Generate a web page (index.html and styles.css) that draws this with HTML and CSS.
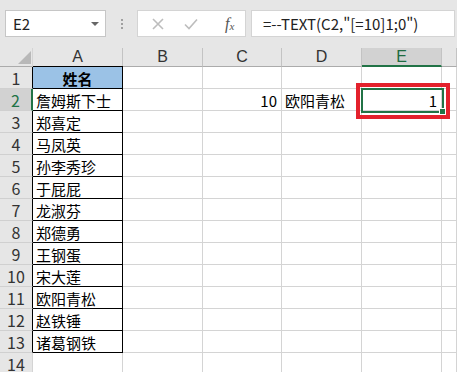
FILE: index.html
```html
<!DOCTYPE html>
<html lang="zh">
<head>
  <meta charset="UTF-8">
  <title>TEXT</title>
  <link rel="stylesheet" href="styles.css">
</head>
<body>
  <!-- formula bar -->
  <div class="toolbar">
    <div class="name-box">
      <span>E2</span>
      <span class="drop"></span>
    </div>
    <div class="grip"><i></i><i></i><i></i></div>
    <div class="fx-box">
      <svg class="ico" width="14" height="14" viewBox="0 0 14 14"><path d="M2 2 L12 12 M12 2 L2 12" stroke="#bdbdbd" stroke-width="1.6" fill="none"/></svg>
      <svg class="ico" width="16" height="14" viewBox="0 0 16 14"><path d="M2 7.5 L6 11.5 L14 2.5" stroke="#bdbdbd" stroke-width="1.6" fill="none"/></svg>
      <span class="fx">f<sub>x</sub></span>
    </div>
    <div class="formula">=--TEXT(C2,"[=10]1;0")</div>
  </div>

  <!-- sheet -->
  <div class="sheet">
    <div class="grid">
      <div class="hd corner"><span class="tri"></span></div>
      <div class="hd col">A</div>
      <div class="hd col">B</div>
      <div class="hd col">C</div>
      <div class="hd col">D</div>
      <div class="hd col active">E</div>
      <div class="hd col"></div>

      <div class="hd row">1</div>
      <div class="c a title">姓名</div>
      <div class="c"></div><div class="c"></div><div class="c"></div><div class="c"></div><div class="c"></div>

      <div class="hd row active">2</div>
      <div class="c a">詹姆斯下士</div>
      <div class="c"></div>
      <div class="c num">10</div>
      <div class="c">欧阳青松</div>
      <div class="c num">1</div>
      <div class="c"></div>

      <div class="hd row">3</div><div class="c a">郑喜定</div><div class="c"></div><div class="c"></div><div class="c"></div><div class="c"></div><div class="c"></div>
      <div class="hd row">4</div><div class="c a">马凤英</div><div class="c"></div><div class="c"></div><div class="c"></div><div class="c"></div><div class="c"></div>
      <div class="hd row">5</div><div class="c a">孙李秀珍</div><div class="c"></div><div class="c"></div><div class="c"></div><div class="c"></div><div class="c"></div>
      <div class="hd row">6</div><div class="c a">于屁屁</div><div class="c"></div><div class="c"></div><div class="c"></div><div class="c"></div><div class="c"></div>
      <div class="hd row">7</div><div class="c a">龙淑芬</div><div class="c"></div><div class="c"></div><div class="c"></div><div class="c"></div><div class="c"></div>
      <div class="hd row">8</div><div class="c a">郑德勇</div><div class="c"></div><div class="c"></div><div class="c"></div><div class="c"></div><div class="c"></div>
      <div class="hd row">9</div><div class="c a">王钢蛋</div><div class="c"></div><div class="c"></div><div class="c"></div><div class="c"></div><div class="c"></div>
      <div class="hd row">10</div><div class="c a">宋大莲</div><div class="c"></div><div class="c"></div><div class="c"></div><div class="c"></div><div class="c"></div>
      <div class="hd row">11</div><div class="c a">欧阳青松</div><div class="c"></div><div class="c"></div><div class="c"></div><div class="c"></div><div class="c"></div>
      <div class="hd row">12</div><div class="c a">赵铁锤</div><div class="c"></div><div class="c"></div><div class="c"></div><div class="c"></div><div class="c"></div>
      <div class="hd row">13</div><div class="c a">诸葛钢铁</div><div class="c"></div><div class="c"></div><div class="c"></div><div class="c"></div><div class="c"></div>
      <div class="hd row">14</div><div class="c"></div><div class="c"></div><div class="c"></div><div class="c"></div><div class="c"></div><div class="c"></div>
    </div>
    <!-- selection + highlight -->
    <div class="highlight"></div>
    <div class="selection"><span class="handle"></span></div>
  </div>
</body>
</html>
```

FILE: styles.css
```css
body {
  margin: 0;
  width: 457px;
  height: 372px;
  overflow: hidden;
  background: #fff;
  font-family: "Noto Sans CJK SC", "Liberation Sans", sans-serif;
  font-size: 15px;
  color: #000;
}
.toolbar {
  height: 48px;
  background: #e6e6e6;
  display: flex;
  align-items: flex-start;
  padding: 10px 2px 0 5px;
  box-sizing: border-box;
}
.name-box {
  width: 101px;
  height: 27px;
  box-sizing: border-box;
  background: #fff;
  border: 1px solid #c6c6c6;
  display: flex;
  align-items: center;
  justify-content: space-between;
  padding: 0 6px 0 7px;
  color: #222;
}
.drop {
  width: 0;
  height: 0;
  border-left: 4px solid transparent;
  border-right: 4px solid transparent;
  border-top: 4px solid #666;
}
.grip {
  width: 31px;
  height: 27px;
  display: flex;
  flex-direction: column;
  align-items: center;
  justify-content: center;
  gap: 2px;
}
.grip i {
  width: 2px;
  height: 2px;
  background: #a0a0a0;
}
.fx-box {
  width: 109px;
  height: 27px;
  box-sizing: border-box;
  background: #fff;
  border: 1px solid #d4d4d4;
  display: flex;
  align-items: center;
  padding-left: 13px;
  gap: 18px;
}
.fx {
  font-family: "Liberation Serif", serif;
  font-style: italic;
  font-size: 16px;
  color: #555;
  margin-left: 8px;
}
.fx sub {
  font-size: 11px;
  vertical-align: -1px;
}
.formula {
  flex: 1;
  margin-left: 5px;
  height: 27px;
  box-sizing: border-box;
  background: #fff;
  border: 1px solid #d4d4d4;
  padding-left: 11px;
  display: flex;
  align-items: center;
  color: #222;
  font-size: 15px;
}
.sheet {
  position: relative;
}
.grid {
  display: grid;
  grid-template-columns: 33px 90px 80px 79px 80px 80px 1fr;
  grid-template-rows: 19px;
  grid-auto-rows: 22px;
}
.grid > div {
  box-sizing: border-box;
  border-right: 1px solid #d4d4d4;
  border-bottom: 1px solid #d4d4d4;
  display: flex;
  align-items: center;
  padding: 1px 3px 0 3px;
  white-space: nowrap;
  overflow: hidden;
}
.hd {
  background: #e6e6e6;
  color: #333;
  justify-content: center;
}
.grid > .hd.col {
  border-right-color: #c3c3c3;
  border-bottom-color: #ababab;
  padding-top: 0;
  font-family: "Liberation Sans", sans-serif;
  font-size: 16px;
  line-height: 18px;
  overflow: visible;
}
.hd.col.active {
  background: #d2d2d2;
  border-bottom: 2px solid #217346;
  color: #1e6b41;
}
.hd.row {
  border-bottom-color: #d0d0d0;
  border-right-color: #000;
  font-size: 16px;
}
.hd.row:last-child,
.hd.row:nth-last-child(7) {
  border-right-color: #d4d4d4;
}
.hd.row.active {
  background: #d2d2d2;
  color: #217346;
  border-right: 2px solid #217346;
}
.corner {
  position: relative;
  border-bottom-color: #ababab !important;
}
.tri {
  position: absolute;
  right: 1px;
  bottom: 2px;
  width: 0;
  height: 0;
  border-left: 13px solid transparent;
  border-bottom: 13px solid #b8b8b8;
}
.c.a {
  border-right-color: #000;
  border-bottom-color: #000;
}
.c.title {
  background: #9bc2e6;
  font-weight: bold;
  justify-content: center;
  border-top: 1px solid #000;
  margin-top: -1px;
}
.c.num {
  justify-content: flex-end;
  padding-right: 4px;
}
.highlight {
  position: absolute;
  left: 356px;
  top: 35px;
  width: 94px;
  height: 36px;
  box-sizing: border-box;
  border: 4px solid #e3212c;
}
.selection {
  position: absolute;
  left: 361px;
  top: 40px;
  width: 83px;
  height: 25px;
  box-sizing: border-box;
  border: 2px solid #217346;
}
.handle {
  position: absolute;
  right: -4px;
  bottom: -4px;
  width: 5px;
  height: 5px;
  background: #217346;
  border: 1px solid #fff;
}
```
